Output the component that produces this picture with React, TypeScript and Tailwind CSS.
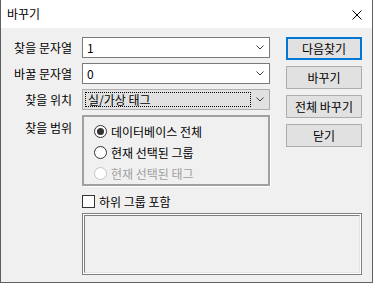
import React from "react";

function Chevron() {
  return (
    <svg width="8" height="5" viewBox="0 0 8 5" className="block">
      <path d="M0.5 0.5 L4 4 L7.5 0.5" fill="none" stroke="#3c3c3c" strokeWidth="1" />
    </svg>
  );
}

function Combo({ value }: { value: string }) {
  return (
    <div className="ml-[10px] flex h-[21px] w-[188px] items-center border border-[#7a7a7a] bg-white pl-[4px] pr-[5px]">
      <span>{value}</span>
      <span className="ml-auto">
        <Chevron />
      </span>
    </div>
  );
}

function Radio({ checked = false, disabled = false, label }: { checked?: boolean; disabled?: boolean; label: string }) {
  return (
    <div className="flex h-[21px] items-center">
      <span
        className={`flex h-[13px] w-[13px] items-center justify-center rounded-full border bg-white ${
          disabled ? "border-[#c4c4c4]" : "border-[#333333]"
        }`}
      >
        {checked && <span className="h-[7px] w-[7px] rounded-full bg-[#333333]" />}
      </span>
      <span className={`ml-[4px] ${disabled ? "text-[#a0a0a0]" : "text-black"}`}>{label}</span>
    </div>
  );
}

function Btn({ children, primary = false }: { children: React.ReactNode; primary?: boolean }) {
  return (
    <div
      className={`flex h-[23px] w-[76px] items-center justify-center bg-[#e1e1e1] ${
        primary ? "border-2 border-[#0078d7]" : "border border-[#adadad]"
      }`}
    >
      {children}
    </div>
  );
}

export default function App() {
  return (
    <div className="flex h-[283px] w-[373px] flex-col border-x border-b border-[#5f5f5f] bg-[#f0f0f0] font-['Noto_Sans_CJK_KR','Noto_Sans',sans-serif] text-[12px] leading-[16px] text-black">
      <div className="flex h-[28px] shrink-0 items-center bg-white pl-[6px] pr-[10px]">
        <span>바꾸기</span>
        <svg width="10" height="10" viewBox="0 0 10 10" className="ml-auto mt-[2px] block">
          <path d="M0.5 0.5 L9.5 9.5 M9.5 0.5 L0.5 9.5" stroke="#000" strokeWidth="1" fill="none" />
        </svg>
      </div>

      <div className="flex pt-[9px]">
        <div className="flex flex-col gap-[5px]">
          <div className="flex items-center">
            <span className="w-[71px] text-right">찾을 문자열</span>
            <Combo value="1" />
          </div>
          <div className="flex items-center">
            <span className="w-[71px] text-right">바꿀 문자열</span>
            <Combo value="0" />
          </div>
          <div className="flex items-center">
            <span className="w-[71px] text-right">찾을 위치</span>
            <div className="ml-[10px] flex h-[21px] w-[188px] items-center border border-[#adadad] bg-[#e1e1e1] pr-[5px]">
              <div className="ml-[2px] flex h-[15px] w-[166px] items-center border border-dotted border-black pl-[2px]">
                실/가상 태그
              </div>
              <span className="ml-auto">
                <Chevron />
              </span>
            </div>
          </div>
          <div className="flex items-start">
            <span className="w-[71px] pt-[5px] text-right">찾을 범위</span>
            <div className="ml-[10px] w-[188px] border-2 border-[#a0a0a0] pb-[0px] pl-[10px] pt-[4px] shadow-[1px_1px_0_#ffffff]">
              <Radio checked label="데이터베이스 전체" />
              <Radio label="현재 선택된 그룹" />
              <Radio disabled label="현재 선택된 태그" />
            </div>
          </div>
        </div>

        <div className="ml-[16px] flex flex-col gap-[6px]">
          <Btn primary>다음찾기</Btn>
          <Btn>바꾸기</Btn>
          <Btn>전체 바꾸기</Btn>
          <Btn>닫기</Btn>
        </div>
      </div>

      <div className="ml-[81px] mt-[9px] flex h-[13px] items-center">
        <span className="h-[13px] w-[13px] border border-[#333333] bg-white" />
        <span className="ml-[4px]">하위 그룹 포함</span>
      </div>

      <div className="ml-[81px] mt-[5px] h-[62px] w-[280px] border border-[#7f7f7f] bg-white p-[1px]">
        <div className="h-full w-full border border-b-[#e3e3e3] border-l-[#7f7f7f] border-r-[#e3e3e3] border-t-[#7f7f7f] bg-[#f0f0f0]" />
      </div>
    </div>
  );
}
